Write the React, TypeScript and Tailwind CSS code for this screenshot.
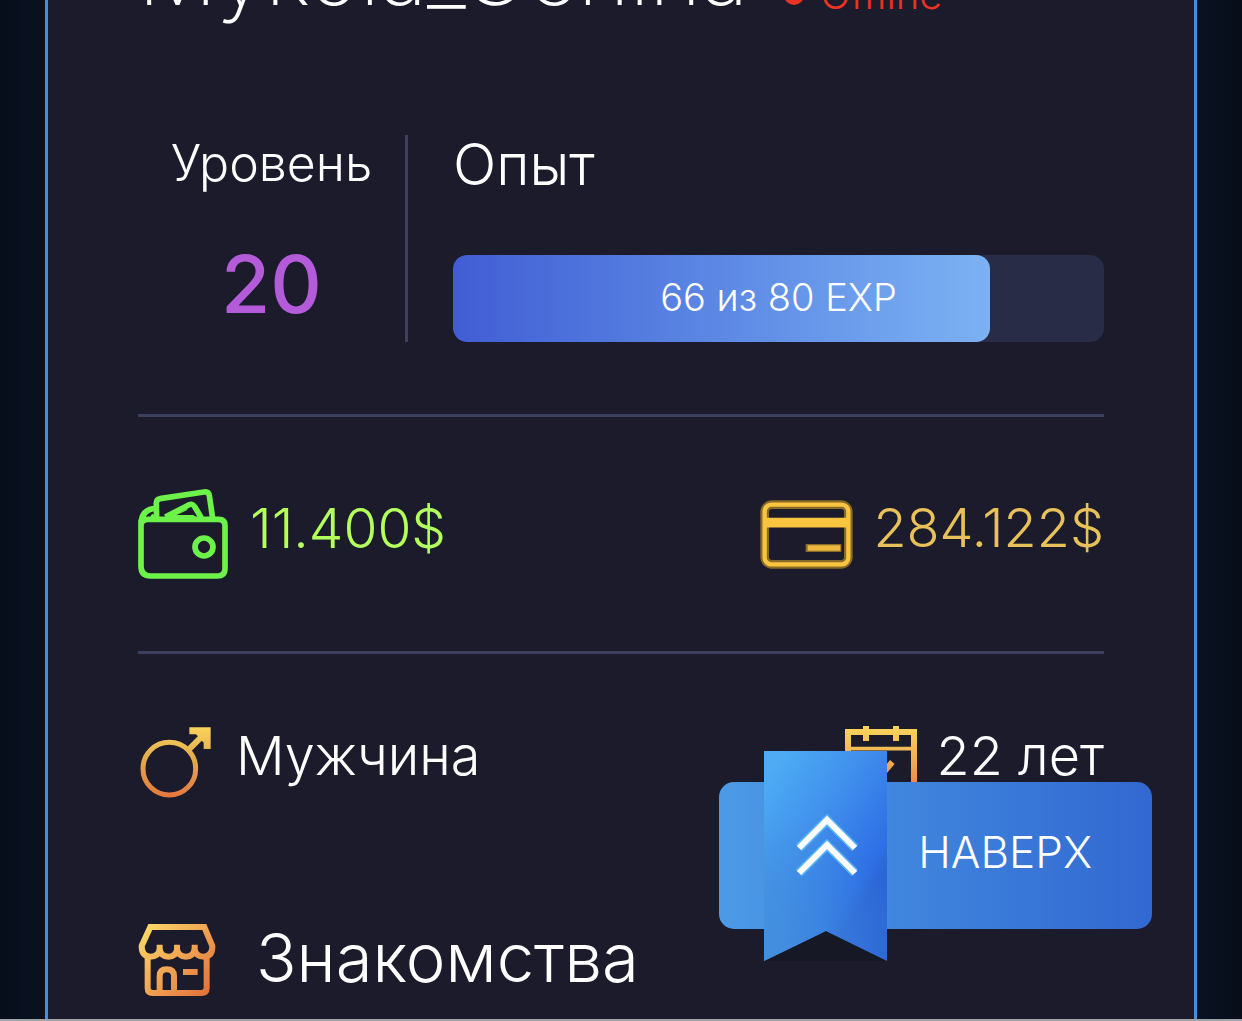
import type { ReactNode } from 'react';

function WalletIcon() {
  return (
    <svg viewBox="0 0 270 270" className="size-[90px] shrink-0" fill="none" stroke="#6df24a" strokeWidth="17" aria-hidden="true">
      <path d="M9 92V232Q9 261 38 261H238Q261 261 261 240V110Q261 91 242 91H30Q11 91 9 108Q9 60 54 58" />
      <path d="M56 90L55 42Q55 31 66 29L198 9Q212 7 214 20L224 88" strokeLinejoin="round" />
      <path d="M82 84L148 50Q162 40 170 53L190 86" />
      <path d="M82 90L146 60L180 90Z" fill="#6df24a" stroke="none" />
      <path d="M116 78L154 60L168 78Z" fill="#1b1b2b" stroke="none" />
      <path d="M56 90L40 78" strokeWidth="10" />
      <circle cx="198" cy="174" r="27" />
    </svg>
  );
}

function CardIcon() {
  return (
    <svg viewBox="0 0 279 207" className="h-[69px] w-[93px] shrink-0" fill="none" aria-hidden="true">
      <rect x="14" y="14" width="251" height="179" rx="22" stroke="#8a6a28" strokeWidth="26" />
      <rect x="14" y="14" width="251" height="179" rx="20" stroke="#f9c440" strokeWidth="13" />
      <path d="M14 68H265" stroke="#f9c440" strokeWidth="29" />
      <path d="M137 144H244" stroke="#8a6a28" strokeWidth="24" />
      <path d="M143 144H241" stroke="#e9b83c" strokeWidth="17" />
    </svg>
  );
}

function MaleIcon() {
  return (
    <svg viewBox="0 0 216 216" className="size-[72px] shrink-0" fill="none" aria-hidden="true">
      <defs>
        <linearGradient id="male" gradientUnits="userSpaceOnUse" x1="0" y1="0" x2="0" y2="216">
          <stop stopColor="#f9d65c" />
          <stop offset="0.45" stopColor="#e3ab4e" />
          <stop offset="1" stopColor="#e5773d" />
        </linearGradient>
      </defs>
      <circle cx="88" cy="128" r="79" stroke="url(#male)" strokeWidth="15" />
      <path d="M143 74L192 25" stroke="url(#male)" strokeWidth="18" />
      <path d="M148 4H212V69H191V50L168 25H148Z" fill="url(#male)" />
    </svg>
  );
}

function CalendarIcon() {
  return (
    <svg viewBox="0 0 216 216" className="size-[72px] shrink-0" fill="none" stroke="url(#cal)" aria-hidden="true">
      <defs>
        <linearGradient id="cal" gradientUnits="userSpaceOnUse" x1="0" y1="0" x2="0" y2="216">
          <stop stopColor="#f9d65c" />
          <stop offset="0.4" stopColor="#f0b553" />
          <stop offset="0.8" stopColor="#ee8a45" />
          <stop offset="1" stopColor="#e5773d" />
        </linearGradient>
      </defs>
      <path d="M9 18H207V207H9Z" strokeWidth="18" />
      <path d="M63 0V45M153 0V45" strokeWidth="18" />
      <path d="M18 68H198" strokeWidth="11" />
      <path d="M142 108L98 160L72 136" strokeWidth="18" />
    </svg>
  );
}

function ShopIcon() {
  return (
    <svg viewBox="0 0 230 216" className="h-[72px] w-[78px] shrink-0" fill="none" stroke="url(#shop)" strokeWidth="18" aria-hidden="true">
      <defs>
        <linearGradient id="shop" gradientUnits="userSpaceOnUse" x1="10" y1="10" x2="220" y2="200">
          <stop stopColor="#fadb67" />
          <stop offset="0.5" stopColor="#f0a553" />
          <stop offset="1" stopColor="#e2703c" />
        </linearGradient>
      </defs>
      <path d="M35 9H197L221 66Q222 96 196 98Q171 98 168 76Q164 98 142 98Q119 98 115 76Q112 98 89 98Q67 98 63 76Q60 98 34 98Q9 96 9 66Z" />
      <path d="M63 62V86M115 62V86M168 62V86" />
      <path d="M27 94V192Q27 207 42 207H188Q204 207 204 192V94" />
      <path d="M63 207V156Q63 136 84 136Q106 136 106 156V207" />
      <path d="M133 144.01L177 144" />
    </svg>
  );
}

function Ribbon() {
  return (
    <svg viewBox="0 0 123 210" className="absolute -top-[31px] left-[45px] h-[210px] w-[123px]" fill="none" aria-hidden="true">
      <defs>
        <linearGradient id="ribbon" gradientUnits="userSpaceOnUse" x1="0" y1="30" x2="125" y2="110">
          <stop stopColor="#4dacf3" />
          <stop offset="0.45" stopColor="#4190ec" />
          <stop offset="0.9" stopColor="#2f70e6" />
          <stop offset="1" stopColor="#2d67d6" />
        </linearGradient>
        <radialGradient id="ribbonEdge" gradientUnits="userSpaceOnUse" cx="0" cy="190" r="130">
          <stop stopColor="#4490dc" />
          <stop offset="1" stopColor="#4490dc" stopOpacity="0" />
        </radialGradient>
      </defs>
      <path d="M0 178H123V210H0Z" fill="#171826" />
      <path d="M0 0H123V210L62 180L0 210Z" fill="url(#ribbon)" />
      <path d="M0 0H123V210L62 180L0 210Z" fill="url(#ribbonEdge)" />
      <path d="M35 97L63 69L91 97M35 122L63 94L91 122" stroke="#62c8fa" strokeWidth="9" opacity="0.7" />
      <path d="M35 97L63 69L91 97M35 122L63 94L91 122" stroke="#fff" strokeWidth="6" />
    </svg>
  );
}

function Row({ children }: { children: ReactNode }) {
  return <div className="flex items-center justify-between">{children}</div>;
}

const exp = { value: 66, max: 80 };

export default function App() {
  return (
    <div className="flex min-h-screen flex-col overflow-hidden border-b-2 border-[#a3a3aa] bg-[linear-gradient(90deg,#070e19_0,#0a1122_45px,#0a1122_calc(100%-45px),#070e19_100%)] font-['Inter','Liberation_Sans',sans-serif] font-light text-white">
      <main className="mx-[45px] flex-1 border-x-[3px] border-[#4590dc] bg-[#1b1b2b] px-[90px]">
        <header className="-mt-[69px] flex items-baseline">
          <h1 className="text-[88px] font-extralight leading-[84px]">Mykola_Genina</h1>
          <p className="ml-9 flex items-center gap-4 text-[40px] leading-[48px] text-[#ec3323]">
            <span className="size-5 rounded-full bg-[#ec3323]" />
            Offline
          </p>
        </header>

        <section className="mt-[116px] flex h-[207px]">
          <div className="flex w-[270px] flex-col items-center justify-between border-r-[3px] border-[#3d3f5f]">
            <h2 className="text-[50px] leading-[56px]">Уровень</h2>
            <p className="mb-[18px] text-[80px] font-medium leading-[80px] text-[#b45bda]">20</p>
          </div>
          <div className="flex flex-1 flex-col justify-between pl-[45px]">
            <h2 className="text-[57px] leading-[60px]">Опыт</h2>
            <div className="relative h-[87px] overflow-hidden rounded-[14px] bg-[#292c46]">
              <div
                className="h-full rounded-[14px] bg-linear-to-r from-[#425dd4] to-[#7cb2f3]"
                style={{ width: `${(exp.value / exp.max) * 100}%` }}
              />
              <p className="absolute inset-0 text-center text-[38px] leading-[84px]">
                {exp.value} из {exp.max} EXP
              </p>
            </div>
          </div>
        </section>

        <hr className="mt-[72px] border-t-[3px] border-[#3d3f5f]" />

        <section className="mt-[72px]">
          <Row>
            <div className="flex items-center gap-[22px]">
              <WalletIcon />
              <p className="pb-3 text-[55px] leading-[56px] text-[#b3ff5c]">11.400$</p>
            </div>
            <div className="flex items-center gap-5">
              <CardIcon />
              <p className="pb-3 text-[54px] leading-[56px] text-[#e9c15a]">284.122$</p>
            </div>
          </Row>
        </section>

        <hr className="mt-[72px] border-t-[3px] border-[#3d3f5f]" />

        <section className="mt-[72px]">
          <Row>
            <div className="flex items-center gap-6 pl-0.5">
              <MaleIcon />
              <p className="pb-3 text-[54px] leading-[56px]">Мужчина</p>
            </div>
            <div className="flex items-center gap-5">
              <CalendarIcon />
              <p className="pb-3 text-[54px] leading-[56px]">22 лет</p>
            </div>
          </Row>
        </section>

        <section className="mt-[126px] flex h-[72px] items-center gap-10">
          <ShopIcon />
          <h2 className="pb-1 text-[67px] leading-[72px]">Знакомства</h2>
        </section>
      </main>

      <button
        type="button"
        className="fixed right-[90px] bottom-[92px] h-[147px] w-[433px] rounded-[15px] bg-linear-to-r from-[#4c9ae6] to-[#3268d1] pr-[60px] pb-2 text-right text-[44px] leading-[60px]"
      >
        <Ribbon />
        НАВЕРХ
      </button>
    </div>
  );
}
